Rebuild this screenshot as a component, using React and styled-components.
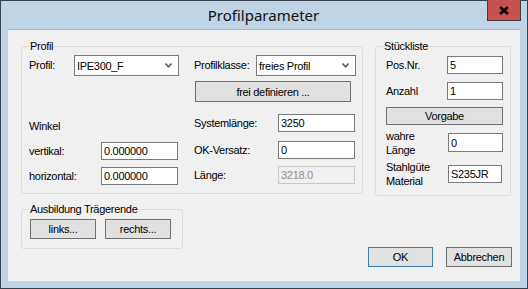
import React from 'react';
import styled, { createGlobalStyle } from 'styled-components';

const GlobalStyle = createGlobalStyle`
  html, body {
    margin: 0;
    padding: 0;
    background: #bfd3e5;
  }
  body {
    font-family: "Liberation Sans", Arial, sans-serif;
    font-size: 11px;
    color: #000;
  }
`;

const Window = styled.div`
  width: 528px;
  height: 289px;
  box-sizing: border-box;
  border: 1px solid #35414d;
  background: #bfd3e5;
  display: flex;
  flex-direction: column;
  padding: 0 7px 7px 7px;
`;

const TitleBar = styled.div`
  height: 29px;
  flex: none;
  display: flex;
  align-items: flex-start;
`;

const Title = styled.div`
  flex: 1;
  text-align: center;
  font-family: "Noto Sans", "Open Sans", sans-serif;
  font-size: 15px;
  line-height: 29px;
  padding-left: 32px;
  color: #111;
`;

const CloseButton = styled.div`
  width: 34px;
  height: 21px;
  margin: -1px -1px 0 0;
  box-sizing: border-box;
  border: 1px solid #3d3d3d;
  border-top: none;
  background: #c75050;
  display: flex;
  align-items: center;
  justify-content: center;
  flex: none;
`;

const Client = styled.div`
  flex: 1;
  background: #f0f0f0;
  box-shadow: 0 -1px 0 #a3bbd2;
  padding: 16px 8px 0 13px;
  display: flex;
  flex-direction: column;
  letter-spacing: -0.3px;
`;

const TopRow = styled.div`
  display: flex;
  align-items: flex-start;
  gap: 12px;
`;

const Group = styled.div`
  position: relative;
  box-sizing: border-box;
  width: ${p => p.$w}px;
  height: ${p => p.$h}px;
  border: 1px solid #dcdcdc;
  border-radius: 3px;
  padding: ${p => p.$pad};
`;

const Legend = styled.span`
  position: absolute;
  top: -7px;
  left: 7px;
  line-height: 13px;
  padding: 0 1px;
  background: #f0f0f0;
`;

const Columns = styled.div`
  display: flex;
`;

const Column = styled.div`
  display: flex;
  flex-direction: column;
  width: ${p => p.$w}px;
`;

const Field = styled.div`
  display: flex;
  align-items: center;
  height: ${p => p.$h || 18}px;
  margin-top: ${p => p.$mt || 0}px;
`;

const Label = styled.span`
  width: ${p => p.$w || 0}px;
  flex: none;
  line-height: ${p => p.$lh || 13}px;
`;

const Edit = styled.div`
  box-sizing: border-box;
  width: ${p => p.$w}px;
  height: 100%;
  border: 1px solid ${p => (p.$disabled ? '#c8c8c8' : '#7a7a7a')};
  background: ${p => (p.$disabled ? '#f0f0f0' : '#fff')};
  color: ${p => (p.$disabled ? '#909090' : '#000')};
  display: flex;
  align-items: center;
  padding-left: 2px;
`;

const Combo = styled(Edit)`
  justify-content: space-between;
  padding-right: 6px;
`;

const Button = styled.div`
  box-sizing: border-box;
  width: ${p => p.$w}px;
  height: ${p => p.$h || 21}px;
  margin-top: ${p => p.$mt || 0}px;
  margin-left: ${p => p.$ml || 0}px;
  border: 1px solid ${p => (p.$default ? '#3c7fb1' : '#707070')};
  background: #e1e1e1;
  display: flex;
  align-items: center;
  justify-content: center;
  flex: none;
`;

const BottomRow = styled.div`
  display: flex;
  justify-content: space-between;
  align-items: flex-start;
  margin-top: 13px;
`;

const ButtonRow = styled.div`
  display: flex;
  gap: ${p => p.$gap}px;
  margin-top: ${p => p.$mt || 0}px;
`;

const Chevron = () => (
  <svg width="7" height="5" viewBox="0 0 7 5">
    <path d="M0.5 0.5 L3.5 3.8 L6.5 0.5" fill="none" stroke="#606060" strokeWidth="1.6" />
  </svg>
);

const CloseX = () => (
  <svg width="10" height="9" viewBox="0 0 10 9">
    <path d="M1 1 L9 8 M9 1 L1 8" stroke="#000" strokeWidth="2.4" />
  </svg>
);

export default function App() {
  return (
    <>
      <GlobalStyle />
      <Window>
        <TitleBar>
          <Title>Profilparameter</Title>
          <CloseButton>
            <CloseX />
          </CloseButton>
        </TitleBar>
        <Client>
          <TopRow>
            <Group $w={342} $h={148} $pad="8px 0 0 7px">
              <Legend>Profil</Legend>
              <Columns>
                <Column $w={165}>
                  <Field $h={21}>
                    <Label $w={45}>Profil:</Label>
                    <Combo $w={105}>
                      IPE300_F
                      <Chevron />
                    </Combo>
                  </Field>
                  <Field $h={19} $mt={41}>
                    <Label>Winkel</Label>
                  </Field>
                  <Field $mt={6}>
                    <Label $w={72}>vertikal:</Label>
                    <Edit $w={77}>0.000000</Edit>
                  </Field>
                  <Field $mt={7}>
                    <Label $w={72}>horizontal:</Label>
                    <Edit $w={77}>0.000000</Edit>
                  </Field>
                </Column>
                <Column $w={165}>
                  <Field $h={21}>
                    <Label $w={62}>Profilklasse:</Label>
                    <Combo $w={100}>
                      freies Profil
                      <Chevron />
                    </Combo>
                  </Field>
                  <Button $w={156} $mt={5} $ml={1}>
                    frei definieren ...
                  </Button>
                  <Field $mt={12}>
                    <Label $w={84}>Systemlänge:</Label>
                    <Edit $w={77}>3250</Edit>
                  </Field>
                  <Field $mt={9}>
                    <Label $w={84}>OK-Versatz:</Label>
                    <Edit $w={77}>0</Edit>
                  </Field>
                  <Field $mt={7}>
                    <Label $w={84}>Länge:</Label>
                    <Edit $w={77} $disabled>
                      3218.0
                    </Edit>
                  </Field>
                </Column>
              </Columns>
            </Group>
            <Group $w={136} $h={150} $pad="9px 0 0 10px">
              <Legend>Stückliste</Legend>
              <Field>
                <Label $w={61}>Pos.Nr.</Label>
                <Edit $w={56}>5</Edit>
              </Field>
              <Field $mt={8}>
                <Label $w={61}>Anzahl</Label>
                <Edit $w={56}>1</Edit>
              </Field>
              <Button $w={117} $h={18} $mt={7}>
                Vorgabe
              </Button>
              <Field $h={19} $mt={8}>
                <Label $w={62} $lh={14}>
                  wahre
                  <br />
                  Länge
                </Label>
                <Edit $w={55}>0</Edit>
              </Field>
              <Field $mt={13}>
                <Label $w={62} $lh={14}>
                  Stahlgüte
                  <br />
                  Material
                </Label>
                <Edit $w={54}>S235JR</Edit>
              </Field>
            </Group>
          </TopRow>
          <BottomRow>
            <Group $w={162} $h={40} $pad="9px 0 0 8px">
              <Legend>Ausbildung Trägerende</Legend>
              <ButtonRow $gap={9}>
                <Button $w={66} $h={20}>links...</Button>
                <Button $w={66} $h={20}>rechts...</Button>
              </ButtonRow>
            </Group>
            <ButtonRow $gap={13} $mt={38}>
              <Button $w={65} $h={20} $default>OK</Button>
              <Button $w={66} $h={20}>Abbrechen</Button>
            </ButtonRow>
          </BottomRow>
        </Client>
      </Window>
    </>
  );
}
